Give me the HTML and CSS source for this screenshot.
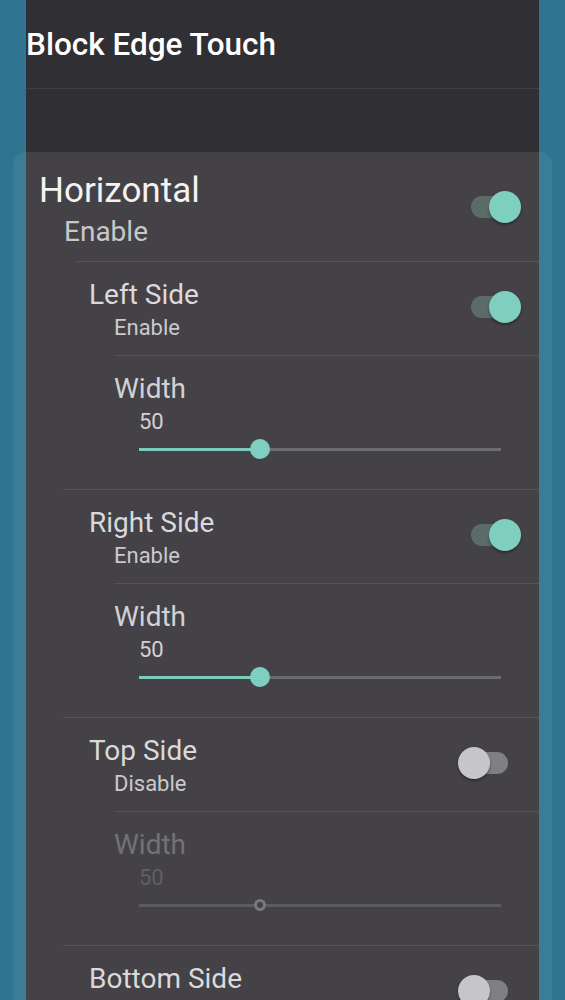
FILE: index.html
```html
<!DOCTYPE html>
<html lang="en">
<head>
<meta charset="utf-8">
<title>Block Edge Touch</title>
<link rel="stylesheet" href="styles.css">
</head>
<body>
<div class="app">
  <header class="appbar"><h1 class="appbar-title">Block Edge Touch</h1></header>
  <div class="appbar-gap"></div>
  <div class="sheet">
    <div class="content">
      <div class="pref pref-main">
        <div class="pref-text">
          <div class="pref-title">Horizontal</div>
          <div class="pref-summary">Enable</div>
        </div>
        <div class="switch on"><span class="switch-track"></span><span class="switch-thumb"></span></div>
      </div>
      <div class="divider divider-group"></div>

      <div class="pref pref-sub">
        <div class="pref-text">
          <div class="pref-title">Left Side</div>
          <div class="pref-summary">Enable</div>
        </div>
        <div class="switch on"><span class="switch-track"></span><span class="switch-thumb"></span></div>
      </div>
      <div class="divider divider-sub"></div>
      <div class="pref-width">
        <div class="pref-title">Width</div>
        <div class="pref-value">50</div>
        <div class="slider">
          <div class="slider-track"><div class="slider-fill" style="width:33.4%"></div></div>
          <span class="slider-thumb" style="left:33.4%"></span>
        </div>
      </div>
      <div class="divider divider-section"></div>

      <div class="pref pref-sub">
        <div class="pref-text">
          <div class="pref-title">Right Side</div>
          <div class="pref-summary">Enable</div>
        </div>
        <div class="switch on"><span class="switch-track"></span><span class="switch-thumb"></span></div>
      </div>
      <div class="divider divider-sub"></div>
      <div class="pref-width">
        <div class="pref-title">Width</div>
        <div class="pref-value">50</div>
        <div class="slider">
          <div class="slider-track"><div class="slider-fill" style="width:33.4%"></div></div>
          <span class="slider-thumb" style="left:33.4%"></span>
        </div>
      </div>
      <div class="divider divider-section"></div>

      <div class="pref pref-sub">
        <div class="pref-text">
          <div class="pref-title">Top Side</div>
          <div class="pref-summary">Disable</div>
        </div>
        <div class="switch off"><span class="switch-track"></span><span class="switch-thumb"></span></div>
      </div>
      <div class="divider divider-sub"></div>
      <div class="pref-width disabled">
        <div class="pref-title">Width</div>
        <div class="pref-value">50</div>
        <div class="slider">
          <div class="slider-track"></div>
          <span class="slider-thumb" style="left:33.4%"></span>
        </div>
      </div>
      <div class="divider divider-section"></div>

      <div class="pref pref-sub">
        <div class="pref-text">
          <div class="pref-title">Bottom Side</div>
          <div class="pref-summary">Disable</div>
        </div>
        <div class="switch off"><span class="switch-track"></span><span class="switch-thumb"></span></div>
      </div>
    </div>
  </div>
</div>
</body>
</html>
```
FILE: styles.css
```css
html, body {
  margin: 0;
  padding: 0;
}
body {
  background: #2f7591;
  font-family: Roboto, "Noto Sans", "Liberation Sans", sans-serif;
  width: 565px;
  height: 1000px;
  overflow: hidden;
}
.app {
  margin-left: 26px;
  width: 513px;
}
.appbar {
  height: 88px;
  background: #302f33;
  border-bottom: 1px solid #3f3e42;
  display: flex;
  align-items: center;
}
.appbar-title {
  margin: 0;
  font-size: 31.5px;
  font-weight: 500;
  color: #ffffff;
}
.appbar-gap {
  height: 63px;
  background: #302f33;
}
.sheet {
  margin: 0 -13px;
  padding: 0 13px;
  border-radius: 13px 13px 0 0;
  background: rgba(255, 255, 255, 0.06);
  min-height: 900px;
}
.content {
  background: #444246;
  min-height: 900px;
}
.pref {
  display: flex;
  align-items: center;
}
.pref-text {
  flex: 1;
}
.pref-main {
  padding: 19px 0 12px 13px;
}
.pref-main .pref-title {
  font-size: 35px;
  line-height: 40px;
  color: #f3f3f4;
}
.pref-main .pref-summary {
  margin: 4px 0 0 25px;
  font-size: 28px;
  line-height: 34px;
  color: #c8c7ca;
}
.pref-sub {
  padding: 16px 0 14px 63px;
}
.pref-title {
  font-size: 28px;
  line-height: 34px;
  color: #dad9dc;
}
.pref-summary {
  margin: 3px 0 0 25px;
  font-size: 22px;
  line-height: 26px;
  color: #cac9cc;
}
.switch {
  position: relative;
  width: 50px;
  height: 32px;
  margin: 0 18px 6px 0;
  flex: none;
}
.switch-track {
  position: absolute;
  left: 0;
  top: 5px;
  width: 37px;
  height: 22px;
  border-radius: 11px;
}
.switch-thumb {
  position: absolute;
  top: 0;
  width: 32px;
  height: 32px;
  border-radius: 50%;
  box-shadow: 0 2px 3px rgba(0, 0, 0, 0.35);
}
.on .switch-track {
  background: #5b6c68;
}
.on .switch-thumb {
  left: 18px;
  background: #7fcfc1;
}
.off .switch-track {
  background: #807f83;
}
.off .switch-thumb {
  left: -13px;
  background: #c6c5c8;
}
.divider {
  height: 1px;
  background: #545357;
}
.divider-group {
  margin-left: 50px;
}
.divider-sub {
  margin-left: 88px;
}
.divider-section {
  margin-left: 37px;
}
.pref-width {
  padding: 16px 38px 30px 88px;
}
.pref-width .pref-title {
  color: #d2d1d4;
}
.pref-value {
  margin: 3px 0 0 25px;
  font-size: 22px;
  line-height: 26px;
  color: #d2d1d4;
}
.slider {
  position: relative;
  height: 20px;
  margin: 4px 0 0 25px;
  display: flex;
  align-items: center;
}
.slider-track {
  flex: 1;
  height: 3px;
  background: #6c6b6f;
}
.slider-fill {
  height: 100%;
  background: #7ccbbd;
}
.slider-thumb {
  position: absolute;
  top: 0;
  width: 20px;
  height: 20px;
  margin-left: -10px;
  border-radius: 50%;
  background: #7ecfc1;
}
.disabled .pref-title {
  color: #737275;
}
.disabled .pref-value {
  color: #605f63;
}
.disabled .slider-track {
  background: #5c5b5f;
}
.disabled .slider-thumb {
  top: 4px;
  width: 12px;
  height: 12px;
  margin-left: -6px;
  box-sizing: border-box;
  border: 3px solid #7a797d;
  background: #444246;
}
```
